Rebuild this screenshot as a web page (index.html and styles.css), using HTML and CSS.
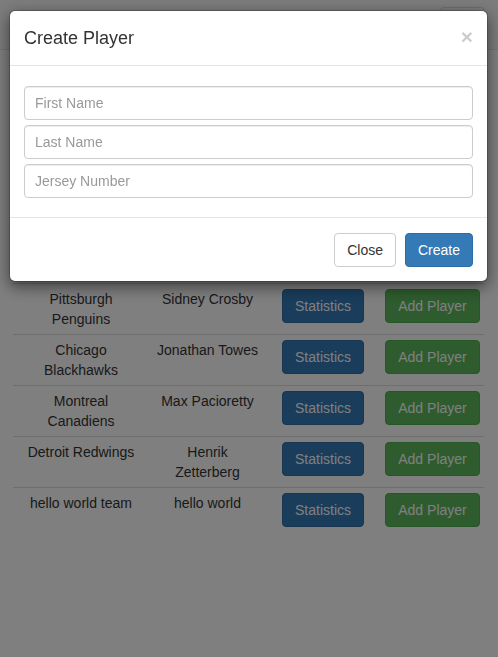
FILE: index.html
```html
<!DOCTYPE html>
<html>
<head>
<meta charset="utf-8">
<title>Teams</title>
<link rel="stylesheet" href="styles.css">
</head>
<body>
<nav class="navbar">
  <button class="navbar-toggle" type="button"><span class="bar"></span><span class="bar"></span><span class="bar"></span></button>
</nav>
<main class="page">
  <table class="teams">
    <colgroup><col class="c1"><col class="c2"><col class="c3"><col class="c4"></colgroup>
    <tbody>
      <tr><td>Pittsburgh Penguins</td><td>Sidney Crosby</td><td><button class="btn btn-primary">Statistics</button></td><td><button class="btn btn-success">Add Player</button></td></tr>
      <tr><td>Chicago Blackhawks</td><td>Jonathan Towes</td><td><button class="btn btn-primary">Statistics</button></td><td><button class="btn btn-success">Add Player</button></td></tr>
      <tr><td>Montreal Canadiens</td><td>Max Pacioretty</td><td><button class="btn btn-primary">Statistics</button></td><td><button class="btn btn-success">Add Player</button></td></tr>
      <tr><td>Detroit Redwings</td><td>Henrik Zetterberg</td><td><button class="btn btn-primary">Statistics</button></td><td><button class="btn btn-success">Add Player</button></td></tr>
      <tr><td>hello world team</td><td>hello world</td><td><button class="btn btn-primary">Statistics</button></td><td><button class="btn btn-success">Add Player</button></td></tr>
    </tbody>
  </table>
</main>
<div class="backdrop"></div>
<div class="modal">
  <div class="modal-content">
    <div class="modal-header">
      <h4 class="modal-title">Create Player</h4>
      <button class="close" type="button">&times;</button>
    </div>
    <div class="modal-body">
      <input class="form-control" type="text" placeholder="First Name">
      <input class="form-control" type="text" placeholder="Last Name">
      <input class="form-control" type="text" placeholder="Jersey Number">
    </div>
    <div class="modal-footer">
      <button class="btn btn-default">Close</button>
      <button class="btn btn-primary">Create</button>
    </div>
  </div>
</div>
</body>
</html>
```
FILE: styles.css
```css
* { box-sizing: border-box; }
html, body { margin: 0; padding: 0; }
body {
  font-family: "Liberation Sans", Arial, sans-serif;
  font-size: 14px;
  line-height: 20px;
  color: #333;
  background: #fff;
  height: 657px;
  overflow: hidden;
}
.navbar {
  height: 50px;
  background: #f8f8f8;
  border-bottom: 1px solid #e7e7e7;
  display: flex;
  align-items: flex-start;
  justify-content: flex-end;
  padding: 0 13px 0 15px;
}
.navbar-toggle {
  margin-top: 7px;
  width: 45px;
  height: 34px;
  border: 1px solid #ddd;
  border-radius: 4px;
  background: transparent;
  display: flex;
  flex-direction: column;
  justify-content: center;
  align-items: center;
  gap: 4px;
  padding: 0;
}
.navbar-toggle .bar { display: block; width: 22px; height: 2px; background: #888; border-radius: 1px; }
.page { padding: 233px 14px 0 13px; }
.teams {
  width: 471px;
  table-layout: fixed;
  border-collapse: collapse;
}
.c1 { width: 136px; }
.c2 { width: 117px; }
.c3 { width: 114px; }
.c4 { width: 104px; }
.teams td {
  padding: 5px;
  text-align: center;
  vertical-align: top;
  border-top: 1px solid #ddd;
}
.teams td:first-child { padding: 5px 10px; }
.btn {
  display: inline-block;
  font-family: inherit;
  font-size: 14px;
  line-height: 20px;
  padding: 6px 12px;
  height: 34px;
  border: 1px solid transparent;
  border-radius: 4px;
  cursor: pointer;
  white-space: nowrap;
}
.btn-primary { background: #337ab7; border-color: #2e6da4; color: #fff; }
.btn-success { background: #5cb85c; border-color: #4cae4c; color: #fff; }
.btn-default { background: #fff; border-color: #ccc; color: #333; }
.teams .btn-primary { width: 82px; }
.teams .btn-success { width: 95px; }

.backdrop {
  position: fixed;
  inset: 0;
  background: rgba(0,0,0,.5);
}
.modal {
  position: fixed;
  top: 10px;
  left: 9px;
  width: 479px;
}
.modal-content {
  background: #fff;
  border: 1px solid rgba(0,0,0,.2);
  border-radius: 6px;
  box-shadow: 0 5px 15px rgba(0,0,0,.5);
  background-clip: padding-box;
}
.modal-header {
  display: flex;
  justify-content: space-between;
  align-items: flex-start;
  padding: 14px;
  border-bottom: 1px solid #e5e5e5;
}
.modal-title { margin: 0; font-size: 18px; line-height: 26px; font-weight: 500; color: #333; }
.close {
  background: none;
  border: 0;
  padding: 0;
  margin-top: 2px;
  font-family: inherit;
  font-size: 21px;
  font-weight: bold;
  line-height: 20px;
  color: #000;
  opacity: .2;
}
.modal-body {
  padding: 20px 14px 19px;
  display: flex;
  flex-direction: column;
  gap: 5px;
}
.form-control {
  display: block;
  width: 100%;
  height: 34px;
  padding: 6px 10px;
  font-family: inherit;
  font-size: 14px;
  line-height: 20px;
  color: #555;
  background: #fff;
  border: 1px solid #ccc;
  border-radius: 4px;
  box-shadow: inset 0 1px 1px rgba(0,0,0,.075);
}
.form-control::placeholder { color: #999; }
.modal-footer {
  display: flex;
  justify-content: flex-end;
  gap: 9px;
  padding: 15px 14px 14px;
  border-top: 1px solid #e5e5e5;
}
```
